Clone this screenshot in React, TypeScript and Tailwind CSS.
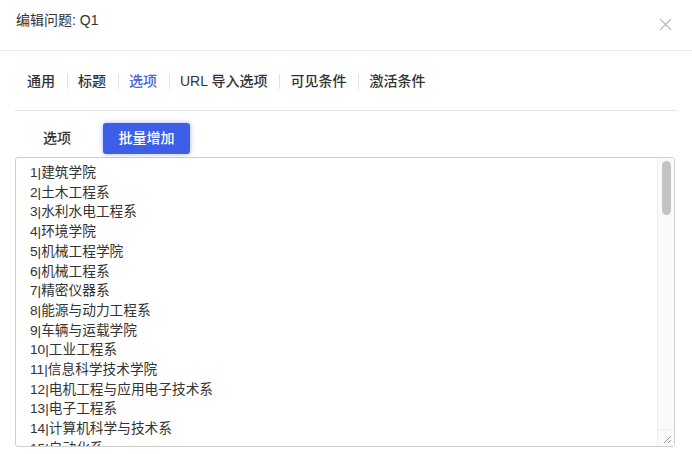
import React from 'react';

const tabs = ['通用', '标题', '选项', 'URL 导入选项', '可见条件', '激活条件'];

const options = [
  '1|建筑学院',
  '2|土木工程系',
  '3|水利水电工程系',
  '4|环境学院',
  '5|机械工程学院',
  '6|机械工程系',
  '7|精密仪器系',
  '8|能源与动力工程系',
  '9|车辆与运载学院',
  '10|工业工程系',
  '11|信息科学技术学院',
  '12|电机工程与应用电子技术系',
  '13|电子工程系',
  '14|计算机科学与技术系',
  '15|自动化系',
  '16|集成电路学院',
  '17|航天航空学院',
  '18|工程物理系',
  '19|化学工程系',
  '20|材料学院',
  '21|数学科学系',
  '22|物理系',
  '23|化学系',
  '24|生命科学学院',
];

export default function App(): JSX.Element {
  return (
    <div
      className="h-[454px] w-[692px] overflow-hidden bg-white text-[#333]"
      style={{ fontFamily: '"Liberation Sans", "Noto Sans CJK SC", sans-serif' }}
    >
      {/* Header */}
      <div className="flex h-[51px] items-center justify-between border-b border-[#e9e9e9] pl-4 pr-[20px]">
        <span className="pb-[9px] text-[14px] text-[#333]">编辑问题: Q1</span>
        <button className="mb-[2px] text-[#bdbdbd]" aria-label="close">
          <svg width="13" height="13" viewBox="0 0 13 13" fill="none" stroke="currentColor" strokeWidth="1.3">
            <path d="M1 1l11 11M12 1L1 12" />
          </svg>
        </button>
      </div>

      {/* Tabs */}
      <div className="mx-[15px] flex h-[60px] items-center border-b border-[#e4e4e4] pl-[12px] pt-[2px]">
        {tabs.map((t, i) => (
          <React.Fragment key={t}>
            {i > 0 && <span className="ml-[12px] mr-[10px] h-[15px] w-px bg-[#e2e2e2]" />}
            <span
              className={
                'text-[14px] font-medium ' + (t === '选项' ? 'text-[#4a62d8]' : 'text-[#333]')
              }
            >
              {t}
            </span>
          </React.Fragment>
        ))}
      </div>

      {/* Sub tabs */}
      <div className="mx-[15px] flex h-[46px] items-start pt-[12px]">
        <span className="ml-[28px] text-[14px] font-medium leading-[31px] text-[#333]">选项</span>
        <button className="ml-[32px] flex h-[31px] w-[87px] items-center justify-center rounded-[3px] bg-[#3d5ee6] text-[14px] font-medium text-white shadow-[0_0_5px_rgba(61,94,230,0.45)]">
          批量增加
        </button>
      </div>

      {/* Bulk textarea */}
      <div className="mx-[15px] flex h-[290px] w-[660px] overflow-hidden rounded-[3px] border border-[#cfcfcf]">
        <textarea
          readOnly
          defaultValue={options.join('\n')}
          className="block h-full flex-1 resize-none overflow-hidden pb-[6px] pl-[14px] pr-[8px] pt-[5px] text-[13.7px] leading-[19.7px] text-[#333] outline-none"
          style={{ fontFamily: '"Liberation Sans", "Noto Sans CJK SC", sans-serif' }}
        />
        {/* scrollbar */}
        <div className="flex w-[17px] flex-col border-l border-[#ededed] bg-[#fafafa]">
          <div className="mx-auto mt-[3px] h-[54px] w-[9px] rounded-full bg-[#c4c4c4]" />
          <div className="flex-1" />
          <div className="flex h-[17px] items-end justify-end border-t border-[#ededed] pb-[2px] pr-[2px]">
            <svg width="9" height="9" viewBox="0 0 9 9" stroke="#999" strokeWidth="1">
              <path d="M8 1L1 8M8 5L5 8" />
            </svg>
          </div>
        </div>
      </div>
    </div>
  );
}
